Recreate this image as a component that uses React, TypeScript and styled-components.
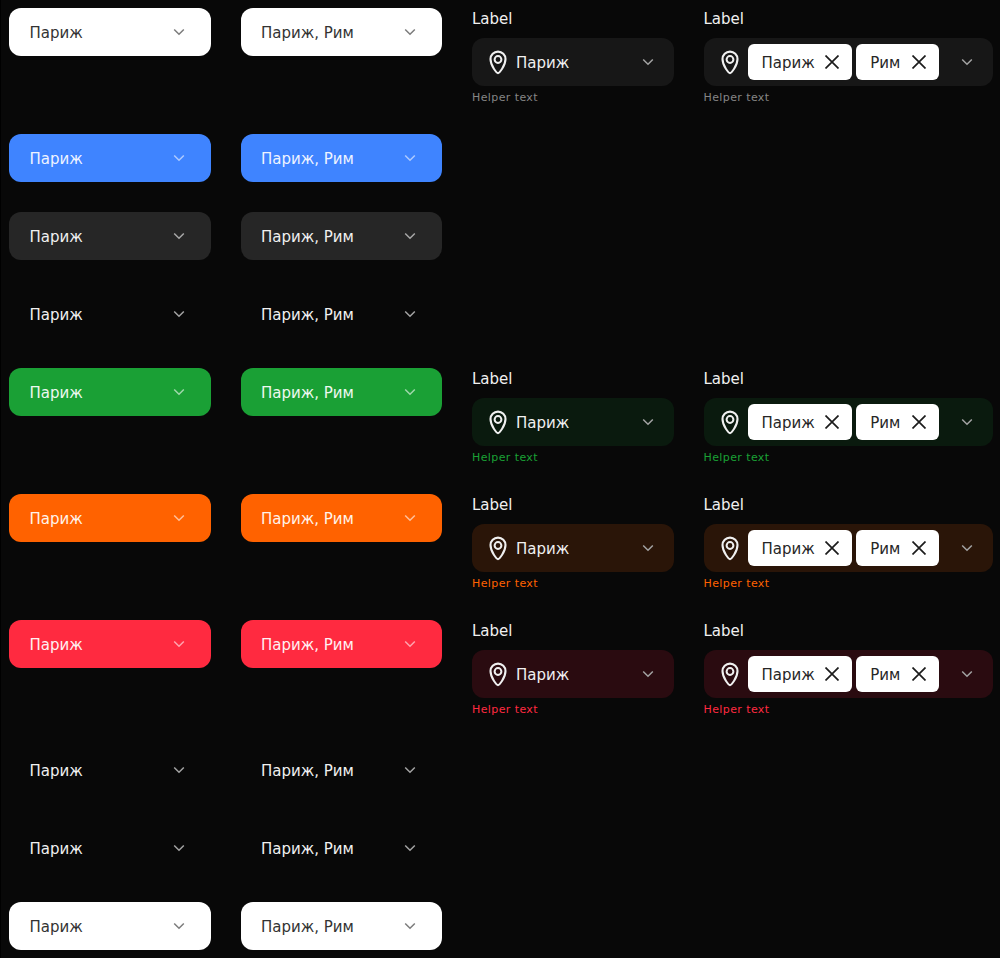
import React from 'react'
import styled, { createGlobalStyle } from 'styled-components'

const Global = createGlobalStyle`
  html, body { margin: 0; padding: 0; background: #080808; }
  body { font-family: 'DejaVu Sans', sans-serif; }
`

const Page = styled.div`
  width: 1000px;
  height: 958px;
  box-sizing: border-box;
  overflow: hidden;
  padding: 8px 0 0 8px;
  border-left: 1px solid #000;
  background: #080808;
  display: grid;
  grid-template-columns: 201.5px 201.5px 201.5px 289px;
  grid-auto-rows: min-content;
  column-gap: 30px;
  row-gap: 30px;
  align-items: start;
`

const Plain = styled.div<{ $bg: string; $color: string }>`
  height: 48px;
  border-radius: 12px;
  background: ${p => p.$bg};
  color: ${p => p.$color};
  display: flex;
  align-items: center;
  padding: 0 20px 0 20.5px;
  box-sizing: border-box;
  font-size: 15px;
`

const Value = styled.span`
  flex: 1;
  padding-top: 2px;
  white-space: nowrap;
`

const Field = styled.div`
  display: flex;
  flex-direction: column;
`

const Label = styled.div`
  height: 24px;
  margin-bottom: 6px;
  color: #f0f0f0;
  font-size: 15px;
  line-height: 22px;
`

const Control = styled.div<{ $bg: string }>`
  height: 48px;
  border-radius: 12px;
  background: ${p => p.$bg};
  color: #f0f0f0;
  display: flex;
  align-items: center;
  padding: 0 14px;
  box-sizing: border-box;
  font-size: 15px;
  gap: 6px;
`

const Chips = styled.div`
  display: flex;
  flex: 1;
  gap: 4px;
`

const Chip = styled.div`
  height: 36px;
  border-radius: 6px;
  background: #fff;
  color: #262626;
  display: flex;
  align-items: center;
  padding: 0 13.5px 0 14px;
  gap: 10px;
  font-size: 15px;

  &:last-child {
    padding-right: 12.5px;
    gap: 12px;
  }
`

const Helper = styled.div<{ $color: string }>`
  height: 18px;
  color: ${p => p.$color};
  font-size: 11px;
  letter-spacing: 0.4px;
  line-height: 24px;
`

const ChevronIcon = styled.svg`
  flex-shrink: 0;
  margin-right: 6px;
`

const PinIcon = styled.svg`
  flex-shrink: 0;
`

const Chevron = ({ color }: { color: string }) => (
  <ChevronIcon width="12" height="8" viewBox="0 0 12 8" fill="none">
    <path d="M1.200 1.500l4.800 4.800 4.800-4.800" stroke={color} strokeWidth="1.500" />
  </ChevronIcon>
)

const Pin = () => (
  <PinIcon width="24" height="26" viewBox="0 0 24 26" fill="none">
    <path d="M12 24.100c-1 0-7.500-7-7.500-14a7.500 7.500 0 0 1 15 0c0 7-6.500 14-7.500 14z" stroke="#f0f0f0" strokeWidth="2.100" />
    <circle cx="12" cy="10.500" r="3.400" stroke="#f0f0f0" strokeWidth="2" />
  </PinIcon>
)

const Close = () => (
  <svg width="14" height="14" viewBox="0 0 14 14" fill="none">
    <path d="M0.500 0.500l13 13M13.500 0.500l-13 13" stroke="#1c1c1c" strokeWidth="1.700" />
  </svg>
)

type Row = { bg: string; color: string; chevron: string; tint?: string; helper?: string }

const ROWS: Row[] = [
  { bg: '#fff', color: '#333', chevron: '#7c7c7c', tint: '#171717', helper: '#858585' },
  { bg: '#3f84ff', color: '#eef3ff', chevron: '#aecaff' },
  { bg: '#262626', color: '#f0f0f0', chevron: '#a8a8a8' },
  { bg: 'transparent', color: '#f0f0f0', chevron: '#a3a3a3' },
  { bg: '#1aa035', color: '#eef8f0', chevron: '#a0d8ab', tint: '#0a1a0e', helper: '#1aa035' },
  { bg: '#ff6200', color: '#fff3ea', chevron: '#ffc09a', tint: '#2a1508', helper: '#ff6200' },
  { bg: '#ff2a40', color: '#fff0f2', chevron: '#ffa4ae', tint: '#2a0b10', helper: '#ff2a40' },
  { bg: 'transparent', color: '#f0f0f0', chevron: '#a3a3a3' },
  { bg: 'transparent', color: '#f0f0f0', chevron: '#a3a3a3' },
  { bg: '#fff', color: '#333', chevron: '#7c7c7c' },
]

export default function App() {
  return (
    <Page>
      <Global />
      {ROWS.map((row, i) => (
        <React.Fragment key={i}>
          <Plain $bg={row.bg} $color={row.color}>
            <Value>Париж</Value>
            <Chevron color={row.chevron} />
          </Plain>
          <Plain $bg={row.bg} $color={row.color}>
            <Value>Париж, Рим</Value>
            <Chevron color={row.chevron} />
          </Plain>
          {row.tint && row.helper ? (
            <>
              <Field>
                <Label>Label</Label>
                <Control $bg={row.tint}>
                  <Pin />
                  <Value>Париж</Value>
                  <Chevron color="#a3a3a3" />
                </Control>
                <Helper $color={row.helper}>Helper text</Helper>
              </Field>
              <Field>
                <Label>Label</Label>
                <Control $bg={row.tint}>
                  <Pin />
                  <Chips>
                    <Chip><Value>Париж</Value><Close /></Chip>
                    <Chip><Value>Рим</Value><Close /></Chip>
                  </Chips>
                  <Chevron color="#a3a3a3" />
                </Control>
                <Helper $color={row.helper}>Helper text</Helper>
              </Field>
            </>
          ) : (
            <>
              <div />
              <div />
            </>
          )}
        </React.Fragment>
      ))}
    </Page>
  )
}
